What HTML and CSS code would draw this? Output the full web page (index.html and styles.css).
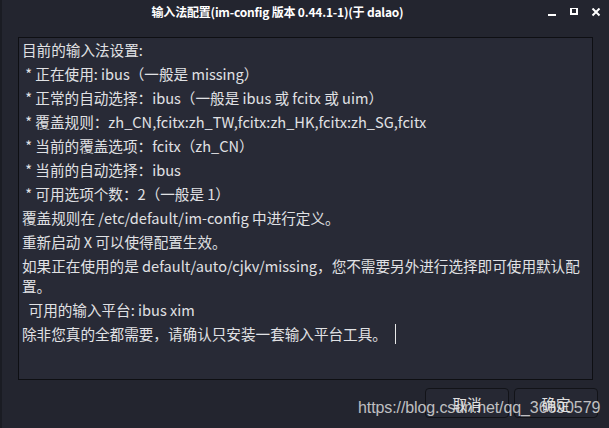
FILE: index.html
```html
<!DOCTYPE html>
<html lang="zh-CN">
<head>
<meta charset="utf-8">
<title>输入法配置</title>
<link rel="stylesheet" href="styles.css">
</head>
<body>
<div class="window">
  <div class="titlebar">
    <div class="title">输入法配置(im-config 版本 0.44.1-1)(于 dalao)</div>
    <div class="controls">
      <svg class="ctl" width="10" height="10" viewBox="0 0 10 10"><rect x="1" y="6" width="8" height="2" fill="#ffffff"/></svg>
      <svg class="ctl" width="10" height="10" viewBox="0 0 10 10"><rect x="2" y="0" width="6" height="6" fill="none" stroke="#ffffff" stroke-width="2"/></svg>
      <svg class="ctl" width="10" height="10" viewBox="0 0 10 10"><path d="M1.5 0.5 L8.5 7.5 M8.5 0.5 L1.5 7.5" stroke="#ffffff" stroke-width="2"/></svg>
    </div>
  </div>
  <div class="content">
    <div class="textbox">
      <p class="line">目前的输入法设置:</p>
      <p class="line"> * 正在使用: ibus（一般是 missing）</p>
      <p class="line"> * 正常的自动选择<span class="pc">：</span>ibus（一般是 ibus 或 fcitx 或 uim）</p>
      <p class="line"> * 覆盖规则<span class="pc">：</span>zh_CN,fcitx:zh_TW,fcitx:zh_HK,fcitx:zh_SG,fcitx</p>
      <p class="line"> * 当前的覆盖选项<span class="pc">：</span>fcitx（zh_CN）</p>
      <p class="line"> * 当前的自动选择<span class="pc">：</span>ibus</p>
      <p class="line"> * 可用选项个数<span class="pc">：</span>2（一般是 1）</p>
      <p class="line">覆盖规则在 /etc/default/im-config 中进行定义。</p>
      <p class="line">重新启动 X 可以使得配置生效。</p>
      <p class="line">如果正在使用的是 default/auto/cjkv/missing<span class="pc">，</span>您不需要另外进行选择即可使用默认配<br>置。</p>
      <p class="line">  可用的输入平台: ibus xim</p>
      <p class="line">除非您真的全都需要<span class="pc">，</span>请确认只安装一套输入平台工具。<span class="caret"></span></p>
    </div>
    <div class="buttons">
      <button class="btn">取消</button>
      <button class="btn">确定</button>
    </div>
  </div>
  <div class="watermark">https://blog.csdn.net/qq_36690579</div>
</div>
</body>
</html>
```

FILE: styles.css
```css
html, body {
  margin: 0;
  padding: 0;
  background: #23252f;
}

.window {
  position: relative;
  width: 609px;
  height: 428px;
  box-sizing: border-box;
  border-left: 2px solid #1a1c23;
  background: #23252f;
  font-family: "Noto Sans CJK SC", "Noto Sans", sans-serif;
  overflow: hidden;
  display: flex;
  flex-direction: column;
}

.titlebar {
  height: 23px;
  display: flex;
  align-items: center;
}

.title {
  flex: 1;
  text-align: center;
  color: #ffffff;
  font-weight: bold;
  font-size: 12px;
  letter-spacing: -0.2px;
  padding-left: 6px;
}

.controls {
  width: 62px;
  display: flex;
  gap: 12px;
  align-items: center;
  padding-top: 3px;
}

.ctl {
  display: block;
}

.content {
  padding: 14px 16px 0 16px;
  display: flex;
  flex-direction: column;
}

.textbox {
  height: 343px;
  box-sizing: border-box;
  background: #282a36;
  border: 1px solid #0e0f13;
  padding: 2px 2px 0 3px;
  color: #e0e1e4;
  font-size: 14.6px;
}

.line {
  margin: 0 0 4px 0;
  line-height: 20px;
  white-space: pre;
}

.pc {
  font-family: "Noto Sans CJK TC", sans-serif;
}

.caret {
  display: inline-block;
  width: 0;
  height: 20px;
  border-left: 1px solid #e8e8e8;
  margin-left: 8px;
  vertical-align: top;
}

.buttons {
  display: flex;
  justify-content: flex-end;
  gap: 5px;
  margin-top: 8px;
  margin-right: -5px;
}

.btn {
  width: 84px;
  height: 30px;
  background: #262833;
  border: 1px solid #121318;
  border-radius: 4px;
  color: #e0e0e0;
  font-family: "Noto Sans CJK SC", sans-serif;
  font-size: 14.6px;
  padding: 0;
}

.watermark {
  position: absolute;
  left: 356px;
  top: 399px;
  font-family: "Liberation Sans", Arial, sans-serif;
  font-size: 16px;
  letter-spacing: -0.1px;
  color: rgba(228, 228, 228, 0.82);
  white-space: nowrap;
}
```
